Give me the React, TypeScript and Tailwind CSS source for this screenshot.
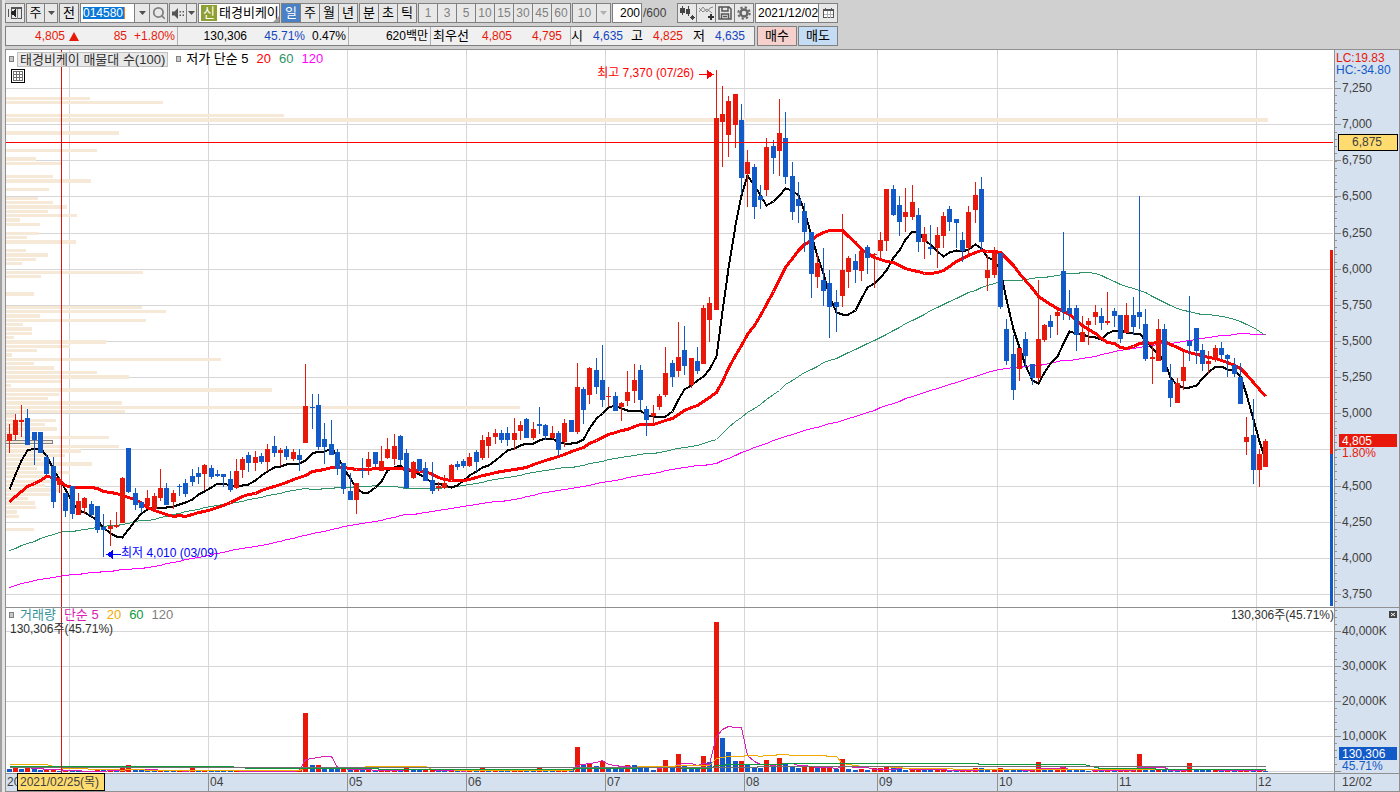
import React from 'react';
import clsx from 'clsx';
import { Search } from 'lucide-react';

const RED = '#e8190a';
const BLUE = '#125ac8';

// One entry per day: high, body top, body bottom, low (chart rows), 1 = up / 0 = down
type Candle = [number, number, number, number, 0 | 1];

const candles: Candle[] = [
  [424, 434, 441, 453, 1], [414, 420, 435, 440, 1], [405, 420, 422, 437, 1], [409, 418, 445, 445, 0],
  [432, 432, 440, 465, 0], [432, 432, 453, 453, 0], [454, 457, 474, 475, 0], [457, 466, 502, 508, 0],
  [477, 480, 485, 493, 1], [493, 493, 511, 517, 0], [486, 486, 514, 519, 0], [493, 501, 515, 515, 1],
  [497, 498, 508, 514, 1], [501, 504, 515, 517, 0], [506, 506, 530, 533, 0], [514, 527, 530, 557, 0],
  [520, 526, 529, 546, 1], [512, 525, 527, 528, 1], [477, 478, 523, 523, 1], [448, 448, 492, 493, 0],
  [488, 493, 505, 510, 0], [501, 502, 508, 513, 0], [490, 498, 506, 507, 1], [493, 496, 509, 510, 1],
  [469, 488, 498, 501, 1], [483, 488, 505, 505, 0], [490, 493, 502, 509, 1], [484, 486, 487, 496, 0],
  [479, 483, 494, 497, 0], [469, 476, 482, 486, 0], [467, 473, 477, 484, 0], [464, 465, 474, 490, 1],
  [465, 468, 477, 479, 0], [470, 474, 476, 477, 0], [474, 474, 477, 487, 0], [471, 479, 490, 492, 0],
  [459, 471, 488, 489, 1], [457, 459, 470, 478, 1], [452, 455, 463, 472, 0], [451, 457, 463, 471, 1],
  [453, 456, 462, 464, 0], [444, 449, 462, 471, 1], [436, 446, 453, 457, 0], [448, 450, 453, 466, 1],
  [446, 449, 457, 460, 0], [449, 452, 459, 461, 1], [449, 455, 460, 471, 0], [364, 406, 443, 443, 1],
  [394, 407, 408, 429, 0], [394, 405, 447, 450, 0], [423, 439, 447, 464, 0], [420, 444, 455, 455, 0],
  [449, 452, 469, 475, 0], [463, 463, 489, 494, 0], [473, 491, 500, 500, 0], [483, 483, 500, 514, 1],
  [458, 470, 471, 478, 0], [452, 459, 467, 475, 1], [452, 452, 464, 467, 0], [446, 461, 471, 471, 1],
  [438, 449, 458, 459, 1], [434, 446, 459, 465, 1], [435, 436, 460, 465, 0], [449, 453, 488, 489, 0],
  [461, 462, 478, 479, 1], [459, 459, 471, 471, 0], [462, 468, 481, 481, 0], [462, 480, 491, 494, 0],
  [482, 486, 488, 491, 1], [475, 483, 488, 489, 1], [464, 465, 479, 480, 1], [461, 464, 467, 470, 0],
  [459, 461, 466, 468, 0], [453, 457, 466, 467, 1], [450, 452, 462, 472, 0], [435, 440, 458, 460, 1],
  [432, 437, 446, 458, 1], [429, 433, 437, 444, 1], [430, 433, 440, 443, 0], [427, 433, 440, 446, 0],
  [418, 433, 440, 450, 1], [421, 425, 431, 440, 1], [418, 419, 438, 438, 0], [422, 429, 438, 440, 1],
  [407, 424, 426, 434, 0], [424, 425, 436, 440, 0], [426, 433, 438, 439, 1], [431, 433, 450, 456, 0],
  [419, 423, 442, 447, 1], [420, 420, 432, 432, 0], [363, 387, 432, 434, 1], [387, 389, 410, 424, 0],
  [367, 368, 395, 404, 1], [358, 370, 387, 394, 0], [345, 380, 400, 407, 0], [387, 396, 397, 407, 1],
  [392, 396, 411, 411, 0], [402, 403, 407, 421, 1], [371, 392, 401, 406, 1], [364, 380, 391, 403, 1],
  [365, 370, 400, 410, 0], [406, 409, 420, 436, 0], [405, 413, 416, 425, 1], [394, 396, 407, 410, 1],
  [347, 373, 395, 397, 1], [360, 363, 377, 387, 0], [322, 357, 371, 377, 1], [326, 350, 366, 375, 0],
  [358, 358, 385, 388, 1], [347, 361, 371, 374, 0], [305, 308, 364, 364, 1], [297, 303, 320, 342, 1],
  [70, 118, 310, 310, 1], [86, 114, 122, 167, 1], [96, 101, 135, 157, 1], [94, 94, 125, 148, 1],
  [104, 120, 178, 194, 0], [150, 162, 174, 207, 1], [164, 167, 207, 219, 0], [185, 196, 200, 209, 0],
  [138, 147, 190, 196, 1], [140, 146, 158, 174, 0], [99, 133, 151, 176, 1], [112, 138, 177, 184, 0],
  [162, 176, 212, 220, 0], [182, 199, 206, 223, 0], [203, 211, 232, 252, 0], [232, 232, 274, 298, 0],
  [254, 263, 277, 288, 1], [248, 280, 291, 306, 0], [270, 283, 307, 338, 0], [290, 302, 307, 332, 0],
  [214, 270, 296, 307, 1], [256, 258, 272, 288, 1], [254, 261, 270, 283, 0], [250, 251, 271, 281, 1],
  [245, 247, 258, 274, 0], [253, 254, 255, 288, 1], [232, 240, 251, 258, 1], [189, 189, 241, 251, 1],
  [185, 189, 215, 216, 0], [196, 205, 222, 236, 0], [188, 212, 217, 232, 1], [185, 202, 217, 220, 1],
  [208, 215, 242, 252, 0], [227, 234, 242, 259, 1], [225, 247, 249, 255, 0], [227, 235, 248, 268, 1],
  [212, 216, 236, 248, 1], [206, 209, 222, 231, 0], [219, 219, 223, 248, 0], [232, 240, 251, 262, 0],
  [206, 212, 248, 257, 1], [182, 195, 210, 223, 1], [177, 189, 242, 250, 0], [255, 270, 278, 291, 1],
  [247, 253, 275, 278, 1], [253, 253, 307, 309, 0], [319, 329, 361, 365, 0], [335, 354, 390, 400, 0],
  [348, 348, 369, 381, 1], [332, 339, 356, 368, 0], [364, 364, 378, 385, 0], [280, 339, 378, 382, 1],
  [324, 325, 340, 342, 1], [315, 321, 327, 338, 0], [308, 312, 316, 335, 1], [232, 271, 312, 320, 0],
  [290, 308, 314, 320, 0], [305, 308, 335, 351, 0], [316, 332, 342, 342, 1], [318, 321, 325, 345, 1],
  [305, 312, 317, 325, 1], [308, 316, 323, 330, 0], [292, 321, 323, 325, 1], [308, 311, 316, 327, 0],
  [315, 315, 339, 343, 0], [303, 315, 333, 333, 1], [297, 315, 327, 335, 0], [196, 312, 317, 329, 0],
  [309, 324, 359, 361, 0], [342, 357, 359, 384, 1], [319, 329, 361, 361, 1], [324, 329, 372, 372, 0],
  [364, 380, 398, 407, 0], [378, 383, 403, 403, 1], [352, 367, 381, 390, 1], [296, 341, 346, 361, 0],
  [328, 328, 351, 364, 0], [344, 350, 364, 371, 0], [351, 361, 364, 374, 1], [345, 348, 358, 362, 1],
  [342, 348, 355, 359, 0], [354, 355, 359, 377, 0], [358, 365, 374, 377, 0], [363, 377, 404, 404, 0],
  [417, 437, 442, 455, 1], [399, 435, 470, 484, 0], [449, 454, 470, 487, 1], [439, 441, 467, 467, 1],
];

// Daily volume, in millions of shares
const volumes = [
  0.9, 1.4, 0.9, 1.4, 0.9, 0.7, 0.8, 0.9, 0.4, 0.5, 0.4, 0.4, 0.3, 0.4, 0.5, 0.5, 0.6, 0.4, 1.2, 1.9,
  0.8, 0.7, 0.4, 0.4, 0.7, 0.4, 0.3, 0.4, 0.3, 1.2, 0.5, 0.7, 0.6, 0.5, 0.3, 0.3, 0.5, 0.4, 0.3, 0.4,
  0.3, 0.4, 0.6, 0.4, 0.3, 0.4, 0.6, 16.9, 1.9, 2, 1.2, 1.1, 0.9, 1, 0.8, 0.9, 0.6, 0.7, 0.5, 0.6,
  0.8, 0.9, 0.7, 1.1, 0.8, 0.5, 0.6, 0.7, 0.4, 0.3, 0.6, 0.4, 0.4, 0.6, 0.5, 1, 0.8, 0.9, 0.6, 0.5,
  0.7, 0.9, 0.8, 0.6, 1, 0.7, 0.5, 0.7, 0.8, 0.7, 7.1, 2.2, 2.5, 1.7, 3.1, 1.3, 1.1, 0.9, 2, 1.9,
  1.3, 1.2, 0.6, 1, 3.4, 1.1, 5.1, 1.9, 1, 0.9, 4.6, 2.8, 42.8, 9.7, 5.7, 3.1, 3.2, 2.2, 1.5, 1.1,
  3.4, 1.9, 4, 2.2, 1.5, 1.1, 1.7, 1.8, 1.1, 1.2, 1.4, 0.9, 3.7, 0.9, 0.6, 0.8, 0.5, 1, 1.2, 1.3,
  1, 0.9, 0.7, 0.8, 1, 0.6, 0.5, 0.7, 1, 0.6, 0.4, 0.5, 0.8, 1.1, 1, 0.8, 0.9, 1, 0.9, 0.7,
  0.5, 0.4, 0.6, 2.9, 1, 0.6, 0.7, 1.5, 0.6, 0.6, 0.6, 0.4, 0.5, 0.4, 0.5, 0.4, 0.5, 0.6, 0.7, 5.1,
  0.6, 0.5, 0.7, 0.6, 0.5, 0.4, 0.5, 2.6, 0.6, 0.6, 0.5, 0.6, 0.4, 0.5, 0.4, 0.5, 0.6, 0.4, 0.5, 0.2,
];

// Volume profile: top row, thickness, right edge
const profile: [number, number, number][] = [
  [97, 3, 90], [101, 3, 163], [114, 3, 284], [118, 4, 1268], [131, 4, 119], [149, 3, 97], [157, 4, 36],
  [162, 3, 62], [175, 3, 53], [179, 4, 91], [188, 3, 49], [197, 3, 38], [201, 3, 53], [205, 4, 67],
  [210, 3, 48], [214, 3, 77], [218, 4, 20], [223, 3, 40], [232, 3, 39], [236, 3, 27], [240, 4, 76],
  [249, 3, 26], [253, 4, 48], [258, 3, 36], [262, 3, 22], [271, 3, 143], [275, 3, 41], [292, 4, 34],
  [306, 3, 142], [310, 3, 166], [314, 4, 40], [319, 3, 146], [323, 3, 23], [327, 4, 32], [332, 3, 32],
  [336, 3, 14], [340, 4, 106], [345, 3, 70], [349, 3, 37], [353, 4, 12], [358, 3, 221], [362, 3, 34],
  [366, 4, 54], [371, 3, 97], [375, 4, 129], [380, 3, 62], [384, 3, 11], [388, 4, 272], [393, 3, 59],
  [397, 3, 48], [401, 4, 122], [406, 3, 520], [410, 3, 125], [414, 4, 14], [419, 3, 56], [423, 3, 45],
  [427, 4, 57], [432, 3, 20], [436, 3, 109], [445, 3, 119], [449, 4, 81], [454, 3, 65], [458, 3, 41],
  [462, 4, 92], [467, 3, 37], [471, 3, 70], [475, 3, 45], [480, 3, 62], [484, 3, 45], [488, 4, 60],
  [493, 3, 50], [497, 3, 28], [501, 4, 35], [506, 3, 36], [510, 4, 17], [515, 3, 19], [528, 3, 34],
];

const months = [
  { x: 69, label: '' },
  { x: 208, label: '04' },
  { x: 347, label: '05' },
  { x: 466, label: '06' },
  { x: 605, label: '07' },
  { x: 744, label: '08' },
  { x: 877, label: '09' },
  { x: 997, label: '10' },
  { x: 1117, label: '11' },
  { x: 1256, label: '12' },
];

const prices = Array.from({ length: 15 }, (_, i) => ({
  value: (7250 - i * 250).toLocaleString('en-US'),
  y: 88 + Math.round(i * 36.14),
  hidden: i === 10,
}));

const dayX = (i: number) => 9 + Math.floor(i * 6.315);
const volumeY = (v: number) => 772 - v * 3.5;

type Seed = [number, number][];

// Simple moving average; days before the first full window come from the seed points
const movingAverage = (values: number[], period: number, seed: Seed) =>
  values.map((_, i) => {
    if (i >= period - 1) {
      const part = values.slice(i - period + 1, i + 1);
      return part.reduce((a, b) => a + b, 0) / period;
    }
    const next = seed.findIndex(([at]) => at >= i);
    if (next === -1) return seed[seed.length - 1][1];
    if (next === 0) return seed[0][1];
    const [x0, y0] = seed[next - 1];
    const [x1, y1] = seed[next];
    return y0 + ((y1 - y0) * (i - x0)) / (x1 - x0);
  });

const toPoints = (ys: number[]) => ys.map((y, i) => `${dayX(i) + 0.5},${Math.round(y) + 0.5}`).join(' ');

const lows = candles.map((c) => c[3]);

const priceLines = [
  {
    color: '#ff00ff',
    width: 1,
    points: toPoints(
      movingAverage(lows, 120, [
        [0, 587], [2, 583], [5, 579], [8, 576], [13, 572], [17, 570], [20, 568], [22, 567], [26, 562],
        [29, 558], [33, 553], [36, 549], [39, 546], [43, 541], [46, 536], [49, 532], [53, 526], [58, 521],
        [62, 515], [66, 512], [69, 509], [71, 507], [76, 502], [80, 499], [84, 493], [88, 489], [90, 487],
        [94, 482], [96, 480], [99, 476], [102, 473], [105, 469], [107, 467], [112, 463], [115, 455], [118, 447],
      ]),
    ),
  },
  {
    color: '#2e9468',
    width: 1,
    points: toPoints(
      movingAverage(lows, 60, [
        [0, 550], [3, 543], [6, 536], [8, 532], [11, 530], [15, 526], [18, 524], [20, 521], [23, 519],
        [26, 514], [29, 510], [32, 506], [36, 502], [39, 498], [42, 494], [45, 490], [47, 488], [49, 489],
        [52, 487], [56, 486], [58, 485],
      ]),
    ),
  },
  {
    color: '#000000',
    width: 2,
    points: toPoints(movingAverage(lows, 5, [[0, 489], [1, 474], [2, 460], [3, 450]])),
  },
  {
    color: '#ff0000',
    width: 3,
    points: toPoints(
      movingAverage(lows, 20, [
        [0, 501], [2, 491], [3, 486], [4, 483], [6, 476], [7, 477], [8, 480], [9, 485], [10, 487],
        [13, 487], [14, 488], [15, 491], [17, 493], [18, 495],
      ]),
    ),
  },
];

const volumeLines = [
  { color: '#d81eb4', values: movingAverage(volumes, 5, [[0, 1.4], [3, 1.4]]) },
  { color: '#f0aa00', values: movingAverage(volumes, 20, [[0, 2.4], [6, 2.4], [7, 1.6], [9, 1.2], [18, 0.7]]) },
  { color: '#109a3c', values: movingAverage(volumes, 60, [[0, 1.6], [35, 1.6], [36, 1.3], [58, 1.1]]) },
  { color: '#707070', values: movingAverage(volumes, 120, [[0, 1.4], [118, 1.4]]) },
];

const Caret: React.FC<{ muted?: boolean }> = ({ muted }) => (
  <svg width="7" height="4" viewBox="0 0 7 4" className={muted ? 'text-[#b0b0b0]' : 'text-[#505050]'}>
    <path d="M0 0h7L3.5 4z" fill="currentColor" />
  </svg>
);

interface CellProps {
  label?: string;
  className?: string;
  children: React.ReactNode;
}

const Cell: React.FC<CellProps> = ({ label, className, children }) => (
  <button type="button" aria-label={label} className={clsx('flex h-full items-center justify-center', className)}>
    {children}
  </button>
);

const Group: React.FC<{ className: string; children: React.ReactNode }> = ({ className, children }) => (
  <div
    className={clsx(
      'flex h-5 shrink-0 items-stretch divide-x divide-[#808080] border border-[#808080] bg-[#e8e8e8]',
      className,
    )}
  >
    {children}
  </div>
);

const Toolbar: React.FC = () => (
  <header className="flex h-[26px] items-center gap-px">
    <Group className="w-5">
      <Cell label="창 목록" className="flex-1">
        <svg width="14" height="12" viewBox="0 0 14 12" shapeRendering="crispEdges">
          <rect x="3.500" y="0.500" width="10" height="11" fill="#e8e8e8" stroke="#555" />
          <rect x="3" y="0" width="11" height="2" fill="#555" />
          <path d="M9.500 2v10" stroke="#888" fill="none" />
          <rect x="0" y="2" width="1" height="8" fill="#555" />
          <path d="M2 6l6-4v8z" fill="#222" />
        </svg>
      </Cell>
    </Group>
    <Group className="w-8 text-[13px]">
      <Cell className="w-[18px]">주</Cell>
      <Cell label="종류 선택" className="flex-1">
        <Caret />
      </Cell>
    </Group>
    <Group className="w-5 text-[13px]">
      <Cell className="flex-1">전</Cell>
    </Group>
    <Group className="w-[88px]">
      <div className="flex w-[54px] items-center bg-white pl-0.5">
        <input
          aria-label="종목코드"
          defaultValue="014580"
          className="h-3 w-[42px] border-r border-[#f08020] bg-[#0a78d8] text-xs leading-3 text-white outline-none"
        />
      </div>
      <Cell label="최근 종목" className="w-[15px]">
        <Caret />
      </Cell>
      <Cell label="종목 검색" className="flex-1">
        <Search className="h-3.5 w-3.5 text-[#808080]" strokeWidth={3} />
      </Cell>
    </Group>
    <Group className="w-7">
      <Cell label="소리" className="w-[17px]">
        <svg width="13" height="11" viewBox="0 0 13 11" fill="#555">
          <path d="M0 3.5h2.5L6 0v11L2.5 7.5H0z" />
          <path d="M7.500 3h1.500v1.500H7.500zM10.500 3H12v1.500h-1.500zM7.500 6.500h1.500V8H7.500zM10.500 6.500H12V8h-1.500z" />
        </svg>
      </Cell>
      <Cell label="소리 설정" className="flex-1">
        <Caret />
      </Cell>
    </Group>
    <div className="relative flex h-5 w-[82px] shrink-0 items-center gap-0.5 border border-[#808080] bg-white pl-0.5 text-[13px]">
      <span className="flex h-4 w-4 shrink-0 items-center justify-center bg-[#8ea032] text-white">신</span>
      <span className="whitespace-nowrap">태경비케이</span>
      <svg width="6" height="6" viewBox="0 0 6 6" className="absolute right-0 bottom-0">
        <path d="M6 0v6H0z" fill="#a0a0a0" />
      </svg>
    </div>
    <Group className="w-[77px] text-[13px]">
      <Cell className="flex-1 bg-[#4a80c4] text-white">일</Cell>
      <Cell className="flex-1">주</Cell>
      <Cell className="flex-1">월</Cell>
      <Cell className="flex-1">년</Cell>
    </Group>
    <Group className="w-[58px] text-[13px]">
      <Cell className="flex-1">분</Cell>
      <Cell className="flex-1">초</Cell>
      <Cell className="flex-1">틱</Cell>
    </Group>
    <Group className="w-[153px] text-[#808080]">
      {[1, 3, 5, 10, 15, 30, 45, 60].map((minutes) => (
        <Cell key={minutes} className="flex-1">
          {minutes}
        </Cell>
      ))}
    </Group>
    <Group className="w-[39px] text-[#808080]">
      <Cell className="w-6">10</Cell>
      <Cell label="주기 선택" className="flex-1">
        <Caret muted />
      </Cell>
    </Group>
    <input
      aria-label="조회 개수"
      defaultValue="200"
      className="h-5 w-[30px] shrink-0 border border-[#808080] bg-white pr-px text-right text-xs outline-none"
    />
    <span className="w-[33px] shrink-0 text-[#404040]">/600</span>
    <Group className="w-[77px]">
      <Cell label="봉 추가" className="flex-1">
        <svg width="15" height="14" viewBox="0 0 15 14" shapeRendering="crispEdges" fill="#444">
          <path d="M0 2h5v5H0zM2 0h1v9H2zM6 3h4v5H6zM8 0h1v10H8zM12 9h1v5h-1zM10 11h5v1h-5zM11 10h3v3h-3z" />
        </svg>
      </Cell>
      <Cell label="지표 추가" className="flex-1">
        <svg width="15" height="14" viewBox="0 0 15 14" fill="none">
          <path d="M0 6l4-5 4 5 3-4 3-1M0 2l4 4 4-3 5 4" stroke="#888" />
          <path d="M12 8v6M9 11h6" stroke="#333" strokeWidth="2" />
        </svg>
      </Cell>
      <Cell label="저장" className="flex-1">
        <svg width="14" height="14" viewBox="0 0 14 14" fill="none" stroke="#555" strokeWidth="1.500">
          <path d="M1 1h10l2 2v10H1zM4 1v4h6V1M3.500 13V8h7v5M5 10.500h4" />
        </svg>
      </Cell>
      <Cell label="설정" className="flex-1">
        <svg width="14" height="14" viewBox="0 0 14 14" fill="none" stroke="#666">
          <circle cx="7" cy="7" r="3.500" strokeWidth="2.500" />
          <circle cx="7" cy="7" r="5.700" strokeWidth="2" strokeDasharray="2.240 2.240" />
        </svg>
      </Cell>
    </Group>
    <Group className="w-[83px]">
      <input
        aria-label="기준일"
        defaultValue="2021/12/02"
        className="w-[63px] bg-white pl-0.5 text-xs outline-none"
      />
      <Cell label="달력" className="flex-1">
        <svg width="11" height="10" viewBox="0 0 11 10" shapeRendering="crispEdges">
          <rect x="0.500" y="1.500" width="10" height="8" fill="#fff" stroke="#555" />
          <rect x="0" y="1" width="11" height="2" fill="#555" />
          <path d="M1 6.500h9M4.500 3v7M7.500 3v7" stroke="#b0b0b0" />
          <path d="M2.500 0v2M8.500 0v2" stroke="#555" />
        </svg>
      </Cell>
    </Group>
  </header>
);

const QuoteBar: React.FC = () => (
  <div className="flex h-5 gap-px">
    <div className="flex w-[750px] shrink-0 items-center border border-[#808080] bg-[#f0f0f0] whitespace-nowrap">
      <div className="flex h-full w-[172px] items-center justify-end border-r border-[#b0b0b0] pr-0.5 text-[#e8190a]">
        <span>4,805</span>
        <svg width="10" height="9" viewBox="0 0 10 9" className="ml-1">
          <path d="M5 0l5 9H0z" fill={RED} />
        </svg>
        <span className="w-12 text-right">85</span>
        <span className="w-12 text-right">+1.80%</span>
      </div>
      <div className="flex h-full w-[171px] items-center justify-end border-r border-[#b0b0b0] pr-0.5">
        <span>130,306</span>
        <span className="w-[58px] text-right text-[#1446c0]">45.71%</span>
        <span className="w-[41px] text-right">0.47%</span>
      </div>
      <div className="flex h-full w-[82px] items-center justify-end border-r border-[#b0b0b0] pr-0.5">620백만</div>
      <div className="flex h-full w-[140px] items-center border-r border-[#b0b0b0] pl-0.5">
        <span className="w-9 text-[13px]">최우선</span>
        <span className="w-[43px] text-right text-[#e8190a]">4,805</span>
        <span className="w-[50px] text-right text-[#e8190a]">4,795</span>
      </div>
      <span className="w-3 text-[13px]">시</span>
      <span className="w-10 text-right text-[#1446c0]">4,635</span>
      <span className="w-5 text-right text-[13px]">고</span>
      <span className="w-10 text-right text-[#e8190a]">4,825</span>
      <span className="w-[22px] text-right text-[13px]">저</span>
      <span className="w-10 text-right text-[#1446c0]">4,635</span>
    </div>
    <div className="flex gap-px pl-px text-[13px]">
      <button type="button" className="w-10 border border-[#808080] bg-[#f5d0cc]">
        매수
      </button>
      <button type="button" className="w-10 border border-[#808080] bg-[#c4dcf4]">
        매도
      </button>
    </div>
  </div>
);

const MonthGrid: React.FC<{ top: number; bottom: number }> = ({ top, bottom }) => (
  <g fill="#d6d6d6">
    {months.map(({ x }) => (
      <rect key={x} x={x} y={top} width="1" height={bottom - top} />
    ))}
  </g>
);

const PricePlot: React.FC = () => (
  <svg
    viewBox="6 50 1328 557"
    preserveAspectRatio="none"
    shapeRendering="crispEdges"
    className="block h-[557px] w-full"
  >
    <MonthGrid top={50} bottom={607} />
    {prices.map(({ y }) => (
      <rect key={y} x="6" y={y} width="1327" height="1" fill="#d6d6d6" />
    ))}
    {profile.map(([y, height, right]) => (
      <rect key={y} x="6" y={y} width={right - 6} height={height} fill="#f6e9d7" />
    ))}
    <rect x="5.500" y="440.500" width="47" height="3" fill="#f6e9d7" stroke="#808080" />

    {priceLines.map(({ color, width, points }) => (
      <polyline key={color} points={points} fill="none" stroke={color} strokeWidth={width} />
    ))}
    {candles.map(([high, top, bottom, low, up], i) => (
      <g key={i} fill={up ? RED : BLUE}>
        <rect x={dayX(i)} y={high} width="1" height={low - high} />
        <rect x={dayX(i) - 2} y={top} width="5" height={bottom - top} />
      </g>
    ))}

    {/* High and low markers */}
    <path d="M699 74h8v-4l7 4.500-7 4.500v-4h-8z" fill="#ff0000" />
    <path d="M121 554h-8v-4l-7 4.500 7 4.500v-4h8z" fill="#0000ff" />

    {/* Buy and sell range */}
    <rect x="1330" y="250" width="3" height="204" fill={RED} />
    <rect x="1330" y="454" width="3" height="152" fill={BLUE} />

    {/* Crosshair */}
    <rect x="6" y="142" width="1327" height="1" fill="#ff0000" />
    <rect x="61" y="50" width="1" height="557" fill="#e01010" />
  </svg>
);

const PriceAxis: React.FC = () => (
  <svg viewBox="1335 50 64 557" className="block h-[557px] w-16" fontSize="12">
    <g fill="#909090" shapeRendering="crispEdges">
      {Array.from({ length: 73 }, (_, i) => (
        <rect key={i} x="1335" y={81 + Math.round(i * 7.228)} width="2" height="1" />
      ))}
      {prices.map(({ y }) => (
        <rect key={y} x="1335" y={y} width="6" height="1" />
      ))}
    </g>
    <g fill="#404040">
      {prices
        .filter(({ hidden }) => !hidden)
        .map(({ value, y }) => (
          <text key={y} x="1342" y={y + 4}>
            {value}
          </text>
        ))}
    </g>
    <text x="1336" y="62" fill={RED}>LC:19.83</text>
    <text x="1336" y="74" fill={BLUE}>HC:-34.80</text>
    <rect x="1338.500" y="134.500" width="59" height="16" fill="#ffdc70" stroke="#000" />
    <text x="1367" y="146" textAnchor="middle" fill="#404040">6,875</text>
    <rect x="1339" y="434" width="58" height="13" fill={RED} />
    <text x="1342" y="445" fill="#fff">4,805</text>
    <text x="1342" y="457" fill={RED}>1.80%</text>
  </svg>
);

const VolumePlot: React.FC = () => (
  <svg
    viewBox="6 608 1328 165"
    preserveAspectRatio="none"
    shapeRendering="crispEdges"
    className="block h-[165px] w-full"
  >
    <MonthGrid top={608} bottom={773} />
    {[631, 666, 701, 736, 771].map((y) => (
      <rect key={y} x="6" y={y} width="1327" height="1" fill="#d6d6d6" />
    ))}
    {volumes.map((v, i) => {
      const height = Math.max(1, Math.round(772 - volumeY(v)));
      const rising = i > 0 && v > volumes[i - 1];
      return <rect key={i} x={dayX(i) - 2} y={772 - height} width="5" height={height} fill={rising ? RED : BLUE} />;
    })}
    {volumeLines.map(({ color, values }) => (
      <polyline key={color} points={toPoints(values.map(volumeY))} fill="none" stroke={color} />
    ))}
    <rect x="61" y="608" width="1" height="165" fill="#e01010" />
  </svg>
);

const VolumeAxis: React.FC = () => (
  <svg viewBox="1335 608 64 165" className="block h-[165px] w-16" fontSize="12">
    <g fill="#909090" shapeRendering="crispEdges">
      {Array.from({ length: 23 }, (_, i) => (
        <rect key={i} x="1335" y={610 + i * 7} width="2" height="1" />
      ))}
      {[631, 666, 701, 736, 771].map((y) => (
        <rect key={y} x="1335" y={y} width="6" height="1" />
      ))}
    </g>
    <g fill="#404040">
      <text x="1342" y="635">40,000K</text>
      <text x="1342" y="670">30,000K</text>
      <text x="1342" y="705">20,000K</text>
      <text x="1342" y="740">10,000K</text>
    </g>
    <rect x="1339" y="747" width="58" height="13" fill={BLUE} />
    <text x="1342" y="758" fill="#fff">130,306</text>
    <text x="1342" y="770" fill={BLUE}>45.71%</text>
    <rect x="1389" y="611" width="8" height="7" fill="#444" />
    <path d="M1391 613l4 3M1395 613l-4 3" stroke="#fff" />
  </svg>
);

const Bullet: React.FC = () => <span className="h-1.5 w-[5px] border border-[#808080] bg-[#c8c8c8]"></span>;

const App: React.FC = () => {
  return (
    <div className="min-h-screen border-l-2 border-[#a0a0a0] bg-[#e4e4e4] pl-[3px] font-['Liberation_Sans','Noto_Sans_CJK_KR',sans-serif] text-xs leading-4 text-black">
      <div className="bg-[#d0d0d0]">
        <Toolbar />
        <QuoteBar />

        <main className="mt-[3px] grid grid-cols-[minmax(0,1fr)_66px] border-b border-l border-[#909090]">
          <section className="relative border-t border-[#909090] bg-white">
            <PricePlot />
            <div className="absolute top-px left-[3px] flex items-center gap-[3px] text-[13px] whitespace-nowrap">
              <Bullet />
              <span className="border border-[#c0c0c0] bg-[#e4e4e4]/80 px-0.5 leading-[13px] text-[#303030]">
                태경비케이 매물대 수(100)
              </span>
              <span className="w-0.5"></span>
              <Bullet />
              <span className="flex gap-2 pl-0.5">
                <span>저가 단순 5</span>
                <span className="text-[#ff0000]">20</span>
                <span className="text-[#2e9468]">60</span>
                <span className="text-[#ff00ff]">120</span>
              </span>
            </div>
            <button type="button" aria-label="표 보기" className="absolute top-[19px] left-[5px]">
              <svg width="14" height="14" viewBox="0 0 14 14" shapeRendering="crispEdges">
                <rect x="0.500" y="0.500" width="13" height="13" fill="#fff" stroke="#000" />
                <path d="M2.500 2.500h9v9h-9zM2 5.500h10M2 8.500h10M5.500 2v10M8.500 2v10" fill="none" stroke="#707070" />
              </svg>
            </button>
            <span className="absolute top-[15px] right-[640px] whitespace-nowrap text-[#ff0000]">
              최고 7,370 (07/26)
            </span>
            <span className="absolute top-[495px] left-[115px] whitespace-nowrap text-[#0000ff]">
              최저 4,010 (03/09)
            </span>
          </section>
          <aside className="border-x border-t border-[#909090] bg-[#d6e1ef]">
            <PriceAxis />
          </aside>

          <section className="relative border-t border-[#909090] bg-white">
            <VolumePlot />
            <div className="absolute top-0 left-[3px] flex items-center gap-2 text-[13px] leading-[14px] whitespace-nowrap">
              <span className="flex items-center gap-1.5 text-[#30909a]">
                <Bullet />
                거래량
              </span>
              <span className="text-[#d81eb4]">단순 5</span>
              <span className="text-[#f0aa00]">20</span>
              <span className="text-[#109a3c]">60</span>
              <span className="text-[#808080]">120</span>
            </div>
            <span className="absolute top-[14px] left-1 leading-[14px] whitespace-nowrap text-[#303030]">
              130,306주(45.71%)
            </span>
            <span className="absolute top-0 right-0 leading-[14px] whitespace-nowrap text-[#303030]">
              130,306주(45.71%)
            </span>
          </section>
          <aside className="border-x border-t border-[#909090] bg-[#d6e1ef]">
            <VolumeAxis />
          </aside>

          <footer className="relative border-t border-[#909090] bg-[#d6e1ef] text-[#404040]">
            <svg className="block h-[17px] w-full" fontSize="12" fill="#404040">
              <text x="1" y="12">20</text>
              {months.map(({ x, label }) => (
                <svg key={x} x={`${((x - 6) / 1328) * 100}%`} overflow="visible">
                  <rect width="1" height="17" fill="#909090" shapeRendering="crispEdges" />
                  <text x="2" y="12">{label}</text>
                </svg>
              ))}
            </svg>
            <span className="absolute -top-px left-[11px] w-[88px] border border-black bg-[#ffdc70] pl-0.5 whitespace-nowrap">
              2021/02/25(목)
            </span>
          </footer>
          <div className="border-x border-t border-[#909090] bg-[#d6e1ef] pl-[7px] text-[#404040]">12/02</div>
        </main>
      </div>
    </div>
  );
};

export default App;
